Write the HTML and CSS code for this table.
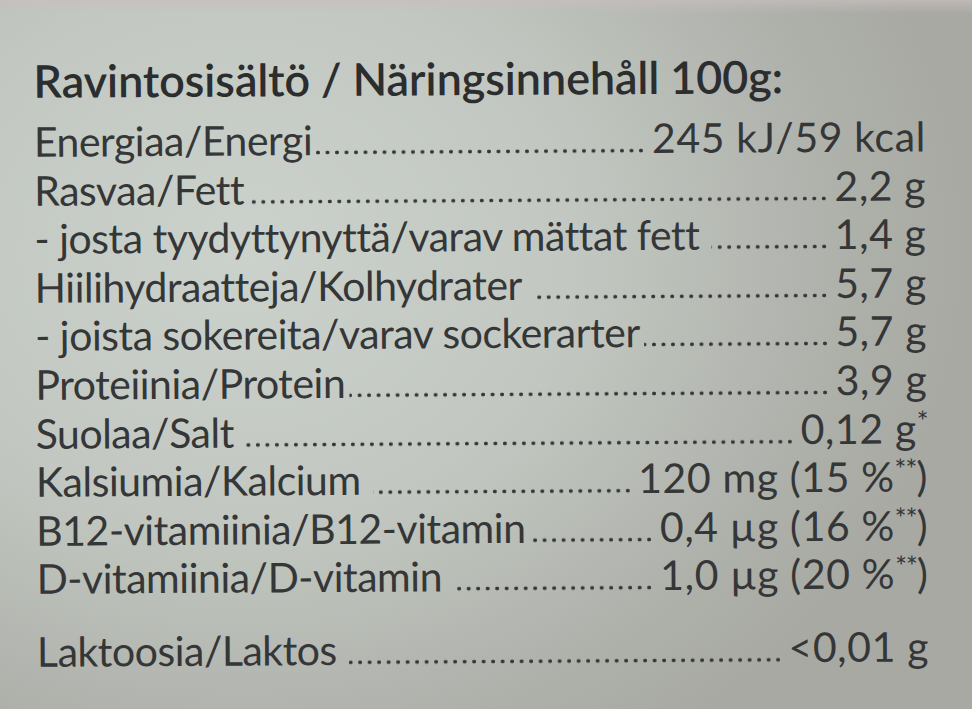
FILE: index.html
```html
<!DOCTYPE html>
<html lang="fi">
<head>
<meta charset="utf-8">
<title>Ravintosisältö</title>
<link rel="stylesheet" href="styles.css">
</head>
<body>
<div class="label">
  <h1 class="title">Ravintosisältö / Näringsinnehåll 100g:</h1>
  <div class="rows">
    <div class="row"><span class="name">Energiaa/Energi</span><span class="dots tight"></span><span class="val">245 kJ/59 kcal</span></div>
    <div class="row"><span class="name">Rasvaa/Fett</span><span class="dots tight"></span><span class="val">2,2 g</span></div>
    <div class="row"><span class="name">- josta tyydyttynyttä/varav mättat fett</span><span class="dots"></span><span class="val">1,4 g</span></div>
    <div class="row"><span class="name">Hiilihydraatteja/Kolhydrater</span><span class="dots"></span><span class="val">5,7 g</span></div>
    <div class="row"><span class="name">- joista sokereita/varav sockerarter</span><span class="dots tight"></span><span class="val">5,7 g</span></div>
    <div class="row"><span class="name">Proteiinia/Protein</span><span class="dots tight"></span><span class="val">3,9 g</span></div>
    <div class="row"><span class="name">Suolaa/Salt</span><span class="dots"></span><span class="val">0,12 g<sup class="star">*</sup></span></div>
    <div class="row"><span class="name">Kalsiumia/Kalcium</span><span class="dots"></span><span class="val">120 mg (15 %<sup class="star">**</sup>)</span></div>
    <div class="row"><span class="name">B12-vitamiinia/B12-vitamin</span><span class="dots tight"></span><span class="val">0,4 µg (16 %<sup class="star">**</sup>)</span></div>
    <div class="row"><span class="name">D-vitamiinia/D-vitamin</span><span class="dots"></span><span class="val">1,0 µg (20 %<sup class="star">**</sup>)</span></div>
    <div class="row gap"><span class="name">Laktoosia/Laktos</span><span class="dots"></span><span class="val">&lt;0,01 g</span></div>
  </div>
</div>
</body>
</html>
```

FILE: styles.css
```css
html, body {
  margin: 0;
  padding: 0;
}
body {
  width: 972px;
  height: 709px;
  overflow: hidden;
  background:
    linear-gradient(180deg, rgba(200,190,190,0.7) 0px, rgba(200,190,190,0) 14px),
    radial-gradient(ellipse 75% 85% at 25% 35%, #cbd2cb 0%, #c2c8c1 45%, #adafa9 85%, #a8a9a3 100%);
  font-family: Lato, "Open Sans", sans-serif;
  color: #353637;
}
.label {
  padding: 56px 47px 0 33px;
  transform: rotate(-0.35deg);
  transform-origin: 0 0;
}
.title {
  margin: 0;
  font-size: 45px;
  font-weight: 600;
  line-height: 50px;
  letter-spacing: -0.1px;
  color: #2c2d2e;
}
.rows {
  margin-top: 12px;
}
.row {
  display: flex;
  align-items: baseline;
  font-size: 41px;
  line-height: 48.6px;
  letter-spacing: -0.5px;
}
.row.gap {
  margin-top: 24px;
}
.name {
  white-space: nowrap;
}
.dots {
  flex: 1;
  height: 5px;
  margin: 0 6px 0 12px;
  background-image: radial-gradient(circle, #353637 1.6px, rgba(53,54,55,0) 2.2px);
  background-size: 9.5px 5px;
  background-repeat: repeat-x;
  background-position: right bottom;
}
.dots.tight {
  margin-left: 4px;
}
.val {
  white-space: nowrap;
  letter-spacing: 0.6px;
}
.star {
  font-size: 28px;
  line-height: 0;
  vertical-align: 12px;
  letter-spacing: -1px;
}
```
